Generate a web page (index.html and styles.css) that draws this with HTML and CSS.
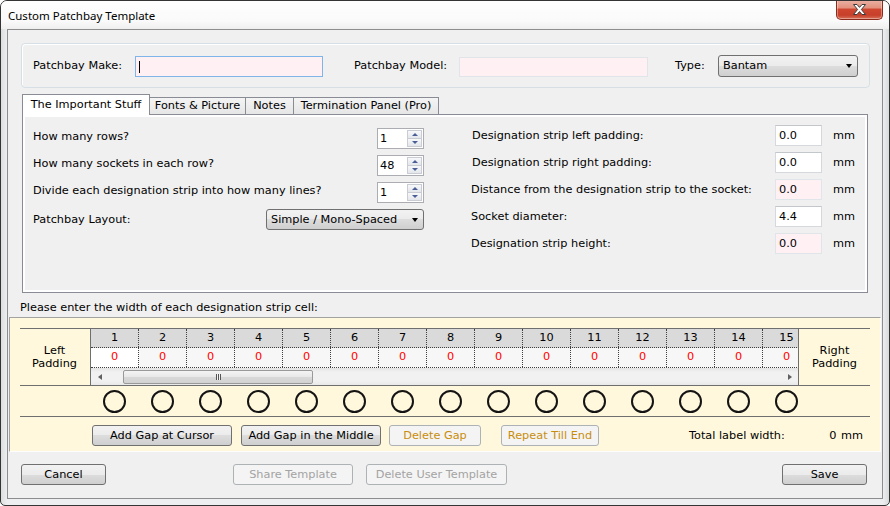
FILE: index.html
```html
<!DOCTYPE html>
<html lang="en">
  <head>
    <meta charset="UTF-8" />
    <title>Custom Patchbay Template</title>
    <link rel="stylesheet" href="styles.css">
  </head>
  <body>
    <div class="window">
      <header class="titlebar">
        <span class="title">Custom Patchbay Template</span>
        <button class="close-btn" aria-label="Close">
          <svg width="13" height="11" viewBox="0 0 13 11">
            <polygon points="0.5,0.5 4,0.5 6.5,3.4 9,0.5 12.5,0.5 8.4,5.5 12.5,10.5 9,10.5 6.5,7.6 4,10.5 0.5,10.5 4.6,5.5" fill="#fff" stroke="#3b3b3b" stroke-width="1" stroke-linejoin="round" />
          </svg>
        </button>
      </header>

      <main class="client">
        <section class="make-box">
          <span class="lbl lbl-make">Patchbay Make:</span>
          <div class="textbox pink focused input-make"><span class="caret"></span></div>
          <span class="lbl lbl-model">Patchbay Model:</span>
          <div class="textbox pink input-model"></div>
          <span class="lbl lbl-type">Type:</span>
          <div class="combo combo-type"><span>Bantam</span><i class="arrow"></i></div>
        </section>

        <nav class="tabs">
          <div class="tab active tab-1">The Important Stuff</div>
          <div class="tab tab-2">Fonts &amp; Picture</div>
          <div class="tab tab-3">Notes</div>
          <div class="tab tab-4">Termination Panel (Pro)</div>
        </nav>

        <section class="tab-panel">
          <div class="pane">
            <div class="left-col">
              <div class="opt-row">
                <span class="lbl raised">How many rows?</span>
                <div class="spin"><span class="spin-val">1</span><span class="spin-btns"><b class="up"></b><b class="down"></b></span></div>
              </div>
              <div class="opt-row">
                <span class="lbl raised">How many sockets in each row?</span>
                <div class="spin"><span class="spin-val">48</span><span class="spin-btns"><b class="up"></b><b class="down"></b></span></div>
              </div>
              <div class="opt-row">
                <span class="lbl raised">Divide each designation strip into how many lines?</span>
                <div class="spin"><span class="spin-val">1</span><span class="spin-btns"><b class="up"></b><b class="down"></b></span></div>
              </div>
              <div class="opt-row">
                <span class="lbl">Patchbay Layout:</span>
                <div class="combo combo-layout"><span>Simple / Mono-Spaced</span><i class="arrow"></i></div>
              </div>
            </div>

            <div class="right-col">
              <div class="mm-row">
                <span class="lbl mm-lbl nudge">Designation strip left padding:</span>
                <div class="textbox mm-box">0.0</div>
                <span class="unit">mm</span>
              </div>
              <div class="mm-row">
                <span class="lbl mm-lbl nudge">Designation strip right padding:</span>
                <div class="textbox mm-box">0.0</div>
                <span class="unit">mm</span>
              </div>
              <div class="mm-row">
                <span class="lbl mm-lbl">Distance from the designation strip to the socket:</span>
                <div class="textbox mm-box pink">0.0</div>
                <span class="unit">mm</span>
              </div>
              <div class="mm-row">
                <span class="lbl mm-lbl">Socket diameter:</span>
                <div class="textbox mm-box">4.4</div>
                <span class="unit">mm</span>
              </div>
              <div class="mm-row">
                <span class="lbl mm-lbl">Designation strip height:</span>
                <div class="textbox mm-box pink">0.0</div>
                <span class="unit">mm</span>
              </div>
            </div>
          </div>
        </section>

        <p class="hint">Please enter the width of each designation strip cell:</p>

        <section class="strip-panel">
          <div class="cells-grid">
            <div class="side-cell left-cell">Left<br>Padding</div>
            <div class="mid">
              <div class="hdr-row">
                <span>1</span><span>2</span><span>3</span><span>4</span><span>5</span>
                <span>6</span><span>7</span><span>8</span><span>9</span><span>10</span>
                <span>11</span><span>12</span><span>13</span><span>14</span><span>15</span>
              </div>
              <div class="val-row">
                <span class="sel">0</span><span>0</span><span>0</span><span>0</span><span>0</span>
                <span>0</span><span>0</span><span>0</span><span>0</span><span>0</span>
                <span>0</span><span>0</span><span>0</span><span>0</span><span>0</span>
              </div>
              <div class="hscroll">
                <span class="sb-arrow sb-left"><i></i></span>
                <span class="sb-thumb"><i class="grip"></i></span>
                <span class="sb-track"></span>
                <span class="sb-arrow sb-right"><i></i></span>
              </div>
            </div>
            <div class="side-cell right-cell">Right<br>Padding</div>
          </div>

          <div class="sockets">
            <i></i><i></i><i></i><i></i><i></i>
            <i></i><i></i><i></i><i></i><i></i>
            <i></i><i></i><i></i><i></i><i></i>
          </div>

          <div class="strip-actions">
            <button class="btn w-cursor">Add Gap at Cursor</button>
            <button class="btn w-middle">Add Gap in the Middle</button>
            <button class="btn gold w-delete" disabled>Delete Gap</button>
            <button class="btn gold w-repeat" disabled>Repeat Till End</button>
            <span class="total-lbl">Total label width:</span>
            <span class="total-val">0 mm</span>
          </div>
        </section>

        <footer class="dialog-actions">
          <button class="btn w-cancel">Cancel</button>
          <button class="btn w-share" disabled>Share Template</button>
          <button class="btn w-deluser" disabled>Delete User Template</button>
          <button class="btn w-save">Save</button>
        </footer>
      </main>
    </div>
  </body>
</html>
```

FILE: styles.css
```css
* {
  box-sizing: border-box;
}

body {
  margin: 0;
  font-family: "DejaVu Sans", sans-serif;
  font-size: 11.3px;
  color: #000;
  background: #fff;
}

/* window chrome */
.window {
  width: 890px;
  height: 506px;
  border: 1px solid #343434;
  border-radius: 7px 7px 5px 5px;
  background: linear-gradient(90deg, #dcdee0, #eceef0 6px, #eceef0 calc(100% - 6px), #d8dadc);
  display: flex;
  flex-direction: column;
  overflow: hidden;
}

.titlebar {
  height: 28px;
  flex: none;
  display: flex;
  align-items: center;
  justify-content: space-between;
  padding-left: 7px;
  background: linear-gradient(#fefefe, #fafafa 70%, #efefef);
}

.title {
  font-family: "Noto Sans", sans-serif;
  font-size: 11.5px;
  color: #000;
  margin-top: 1px;
}

.close-btn {
  align-self: flex-start;
  margin: -1px 6px 0 0;
  width: 47px;
  height: 20px;
  padding: 0;
  border: 1px solid #8c2a1b;
  border-top: 0;
  border-radius: 0 0 5px 5px;
  background: linear-gradient(#eab2a5, #e3927f 40%, #cf4630 50%, #c7402a 80%, #d7725a);
  display: flex;
  align-items: center;
  justify-content: center;
  box-shadow: inset 0 0 0 1px rgba(255, 255, 255, 0.35);
}

.client {
  flex: none;
  height: 470px;
  margin: 0 6px;
  border: 1px solid #8b8d8f;
  background: #f0f0f0;
  display: flex;
  flex-direction: column;
}

/* shared controls */
.lbl {
  white-space: nowrap;
}

.raised {
  padding-bottom: 5px;
}

.nudge {
  padding-left: 1px;
}

.textbox {
  height: 21px;
  border: 1px solid #d5d9de;
  border-top-color: #c3c7cc;
  background: #fff;
  padding: 3px 0 0 3px;
  line-height: 14px;
}

.textbox.pink {
  background: #fff0f4;
  border-color: #e0e5ea;
}

.textbox.focused {
  border-color: #7fb5e8;
}

.caret {
  display: block;
  width: 1px;
  height: 12px;
  margin: 1px 0 0 0;
  background: #000;
}

.combo {
  position: relative;
  border: 1px solid #707070;
  border-radius: 3px;
  background: linear-gradient(#f2f2f2 0%, #ebebeb 50%, #dddddd 50%, #cfcfcf 100%);
  padding-left: 4px;
  display: flex;
  align-items: center;
}

.combo .arrow {
  position: absolute;
  right: 5px;
  top: 50%;
  margin-top: -2px;
  border-top: 4px solid #000;
  border-left: 3.5px solid transparent;
  border-right: 3.5px solid transparent;
}

.btn {
  height: 21px;
  padding: 0;
  border: 1px solid #707070;
  border-radius: 3px;
  background: linear-gradient(#f2f2f2 0%, #ebebeb 50%, #dddddd 50%, #cfcfcf 100%);
  font: inherit;
  color: #000;
  flex: none;
}

.btn:disabled {
  border-color: #adb2b5;
  background: #f4f4f4;
  color: #a3a3a3;
}

.btn.gold:disabled {
  color: #c98d0c;
}

/* top group */
.make-box {
  flex: none;
  height: 45px;
  margin: 13px 12px 0 13px;
  border: 1px solid #d5dfe5;
  border-radius: 4px;
  box-shadow: inset 1px 1px 0 #fff;
  display: flex;
  align-items: center;
  padding-left: 11px;
}

.lbl-make {
  width: 102px;
}

.input-make {
  width: 188px;
  margin-top: 2px;
}

.lbl-model {
  width: 105px;
  margin-left: 31px;
}

.input-model {
  width: 189px;
  height: 20px;
  margin-top: 3px;
}

.lbl-type {
  width: 43px;
  margin-left: 27px;
}

.combo-type {
  width: 140px;
  height: 22px;
}

/* tabs */
.tabs {
  flex: none;
  position: relative;
  z-index: 1;
  height: 20px;
  margin: 6px 0 0 14px;
  display: flex;
  align-items: flex-end;
}

.tab {
  height: 17px;
  margin-left: -1px;
  border: 1px solid #898c95;
  border-bottom: 0;
  background: linear-gradient(#f4f4f4, #e6e6e6);
  text-align: center;
  line-height: 16px;
  white-space: nowrap;
}

.tab.active {
  height: 21px;
  margin-left: 0;
  margin-bottom: -1px;
  background: #fff;
  line-height: 19px;
  position: relative;
  z-index: 2;
}

.tab-1 { width: 128px; }
.tab-2 { width: 97px; }
.tab-3 { width: 49px; }
.tab-4 { width: 146px; }

.tab-panel {
  flex: none;
  height: 179px;
  margin: 0 14px;
  border: 1px solid #898c95;
  background: #fff;
  padding: 2px;
}

.pane {
  height: 100%;
  background: #f0f0f0;
  display: flex;
}

.left-col {
  width: 391px;
  margin-left: 8px;
  padding-top: 11px;
  display: flex;
  flex-direction: column;
  gap: 6px;
}

.opt-row {
  height: 21px;
  display: flex;
  align-items: center;
  justify-content: space-between;
}

.spin {
  width: 47px;
  height: 21px;
  border: 1px solid #abadb3;
  background: #fff;
  display: flex;
}

.spin-val {
  flex: 1;
  padding: 3px 0 0 2px;
  line-height: 14px;
}

.spin-btns {
  width: 15px;
  margin: 1px 1px 1px 0;
  display: flex;
  flex-direction: column;
}

.spin-btns b {
  flex: 1;
  border: 1px solid #c9ccd3;
  background: linear-gradient(#f7f8fa, #e3e6eb);
  display: flex;
  align-items: center;
  justify-content: center;
}

.spin-btns b + b {
  border-top: 0;
}

.spin-btns b::before {
  content: "";
  border-left: 3px solid transparent;
  border-right: 3px solid transparent;
}

.spin-btns .up::before {
  border-bottom: 3px solid #4a5f97;
}

.spin-btns .down::before {
  border-top: 3px solid #4a5f97;
}

.combo-layout {
  width: 158px;
  height: 21px;
}

.right-col {
  margin-left: 47px;
  padding-top: 8px;
  display: flex;
  flex-direction: column;
  gap: 6px;
}

.mm-row {
  height: 21px;
  display: flex;
  align-items: center;
}

.mm-lbl {
  width: 304px;
}

.mm-box {
  width: 47px;
}

.unit {
  margin-left: 11px;
}

/* designation strip */
.hint {
  flex: none;
  margin: 8px 0 2px 12px;
  height: 14px;
  line-height: 14px;
}

.strip-panel {
  flex: none;
  height: 135px;
  margin: 0 1px;
  border: 1px solid;
  border-color: #a3a3a3 #fdfdfd #fdfdfd #a3a3a3;
  background: #fff8dc;
  padding: 10px 10px 0 10px;
}

.cells-grid {
  height: 58px;
  border-top: 1px solid #6f6f6f;
  border-bottom: 1px solid #6f6f6f;
  display: flex;
}

.side-cell {
  width: 71px;
  display: flex;
  align-items: center;
  justify-content: center;
  text-align: center;
  line-height: 13px;
}

.left-cell {
  border-right: 1px solid #6f6f6f;
  padding-right: 1px;
}

.mid {
  width: 708px;
  border-right: 1px solid #6f6f6f;
  overflow: hidden;
}

.hdr-row,
.val-row {
  display: flex;
  width: 720px;
  border-bottom: 1px dotted #404040;
}

.hdr-row {
  height: 19px;
  background: #dadada;
  line-height: 17px;
}

.val-row {
  height: 20px;
  background: #f7f7f7;
  line-height: 18px;
  color: #ff0000;
}

.hdr-row span,
.val-row span {
  flex: 0 0 48px;
  border-right: 1px dotted #404040;
  text-align: center;
}

.val-row .sel {
  background: #fff;
}

.hscroll {
  width: 707px;
  height: 17px;
  display: flex;
  align-items: center;
  background: linear-gradient(#e3e3e3, #f1f1f1 25%, #f1f1f1 75%, #e9e9e9);
}

.sb-arrow {
  width: 17px;
  height: 17px;
  display: flex;
  align-items: center;
  justify-content: center;
}

.sb-arrow i {
  border-top: 3.5px solid transparent;
  border-bottom: 3.5px solid transparent;
}

.sb-left i {
  border-right: 4px solid #606060;
}

.sb-right i {
  border-left: 4px solid #606060;
}

.sb-thumb {
  width: 190px;
  height: 14px;
  margin-left: 15px;
  border: 1px solid #999;
  border-radius: 2px;
  background: linear-gradient(#f4f4f4, #e8e8e8 50%, #d9d9d9 50%, #d2d2d2);
  display: flex;
  align-items: center;
  justify-content: center;
}

.grip {
  width: 5px;
  height: 6px;
  background: repeating-linear-gradient(90deg, #555 0 1px, #f4f4f4 1px 2px);
}

.sb-track {
  flex: 1;
}

.sockets {
  height: 31px;
  border-bottom: 1px solid #6f6f6f;
  padding-left: 70px;
  display: flex;
  align-items: center;
}

.sockets i {
  flex: 0 0 48px;
  display: flex;
  justify-content: center;
}

.sockets i::before {
  content: "";
  width: 19px;
  height: 19px;
  border: 2px solid #141414;
  border-radius: 50%;
}

.strip-actions {
  height: 21px;
  margin-top: 8px;
  padding-left: 72px;
  display: flex;
  align-items: center;
}

.w-cursor { width: 140px; }
.w-middle { width: 140px; margin-left: 9px; }
.w-delete { width: 92px; margin-left: 8px; }
.w-repeat { width: 98px; margin-left: 20px; }

.total-lbl {
  margin-left: 90px;
}

.total-val {
  margin-left: auto;
  margin-right: 7px;
  word-spacing: 1px;
}

/* dialog buttons */
.dialog-actions {
  flex: none;
  margin-top: 12px;
  padding: 0 15px 0 13px;
  display: flex;
}

.w-cancel { width: 85px; }
.w-share { width: 120px; margin-left: 127px; }
.w-deluser { width: 141px; margin-left: 13px; }
.w-save { width: 85px; margin-left: auto; }
```
